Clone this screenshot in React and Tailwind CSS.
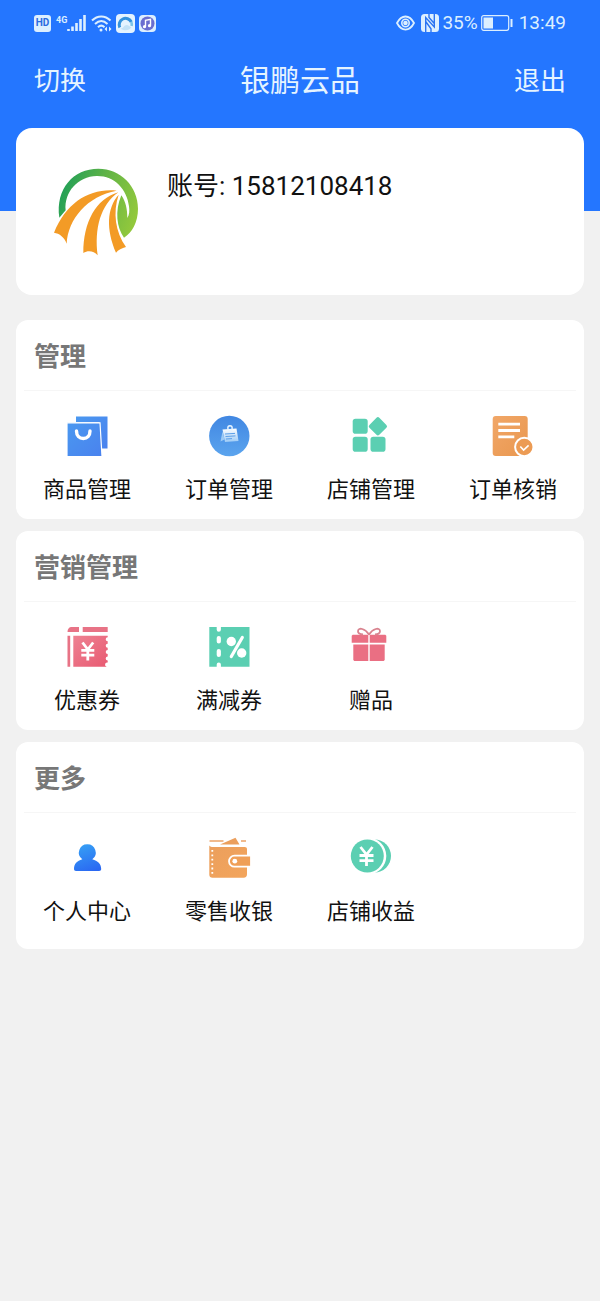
import clsx from 'clsx';

const BagIcon = () => (
  <svg viewBox="0 0 44 44" className="size-11" aria-hidden="true">
    <defs>
      <linearGradient id="bag" x1="0" y1="0" x2="1" y2="1">
        <stop offset="0" stopColor="#4a98f0" />
        <stop offset="1" stopColor="#4a82ee" />
      </linearGradient>
    </defs>
    <path d="M11 2.5h31.500v32H36L34.500 8H11z" fill="url(#bag)" />
    <path d="M2 8.800h33l2 33.700H2z" fill="url(#bag)" stroke="#fff" strokeWidth="1.200" />
    <path d="M11.500 17c0 5 3 7.500 6.800 7.500s6.700-2.500 6.700-7.500" fill="none" stroke="#fff" strokeWidth="3.400" strokeLinecap="round" />
  </svg>
);

const NoteIcon = () => (
  <svg viewBox="0 0 44 44" className="size-11" aria-hidden="true">
    <defs>
      <linearGradient id="note" x1="0" y1="0" x2="0" y2="1">
        <stop offset="0" stopColor="#4187e2" />
        <stop offset="1" stopColor="#5ba4ee" />
      </linearGradient>
      <linearGradient id="paper" x1="0" y1="0" x2="0" y2="1">
        <stop offset="0" stopColor="#fff" />
        <stop offset="1" stopColor="#9dcbf6" />
      </linearGradient>
    </defs>
    <circle cx="22.300" cy="22" r="20.200" fill="url(#note)" />
    <path d="M15.500 17.500l-2 10 4-2z" fill="#9dcbf6" />
    <path d="M15.500 15.500l14-1 2 12.500-13.500 1z" fill="url(#paper)" />
    <circle cx="23" cy="14" r="2.200" fill="none" stroke="#e8f4ff" strokeWidth="1.400" />
    <path d="M18 20l10-.6M18.500 22.500l10-.6M19 25l6-.4" stroke="#5b9fe8" strokeWidth="1" />
  </svg>
);

const ShopIcon = () => (
  <svg viewBox="0 0 44 44" className="size-11" fill="#5bcfb2" aria-hidden="true">
    <rect x="3.700" y="4.700" width="15" height="15" rx="2.800" />
    <rect x="3.700" y="22.700" width="15" height="15" rx="2.800" />
    <rect x="21.500" y="22.700" width="15" height="15" rx="2.800" />
    <rect x="21.900" y="5.300" width="14" height="14" rx="2" transform="rotate(45 28.900 12.300)" />
  </svg>
);

const VerifyIcon = () => (
  <svg viewBox="0 0 44 44" className="size-11" aria-hidden="true">
    <defs>
      <linearGradient id="verify" x1="0" y1="0" x2="1" y2="1">
        <stop offset="0" stopColor="#f1a768" />
        <stop offset="1" stopColor="#e9974f" />
      </linearGradient>
    </defs>
    <rect x="1.700" y="2" width="35" height="40" rx="3" fill="url(#verify)" />
    <path d="M7.300 10.200H29M7.300 16.500H29M7.300 22.800h16" stroke="#fff" strokeWidth="2.800" />
    <circle cx="33.300" cy="33" r="9.200" fill="#ec9b54" stroke="#fff" strokeWidth="2" />
    <path d="M29.300 32.500l3.300 3.500 5-4.700" fill="none" stroke="#fff" strokeWidth="1.600" />
  </svg>
);

const CouponIcon = () => (
  <svg viewBox="0 0 44 44" className="size-11" aria-hidden="true">
    <defs>
      <linearGradient id="coupon" x1="0" y1="0" x2="1" y2="1">
        <stop offset="0" stopColor="#ee8292" />
        <stop offset="1" stopColor="#e85a72" />
      </linearGradient>
    </defs>
    <path d="M2.500 7c0-3 1.500-5 4-5H14v5zM17.700 2h25v5h-25zM2.500 10.700h2.700v31H2.500z" fill="#e87386" />
    <path d="M8.300 10.700h34.400v1.600a2 2 0 000 4v2.400a2 2 0 000 4v2.400a2 2 0 000 4v2.400a2 2 0 000 4v2a2 2 0 00-1 4.200H8.300z" fill="url(#coupon)" />
    <path d="M17.500 17.500l5.300 7 5.400-7M22.800 24.500V35.500M16.300 25.300h13M16.300 30.200h13" fill="none" stroke="#fff" strokeWidth="2.800" />
  </svg>
);

const DiscountIcon = () => (
  <svg viewBox="0 0 44 44" className="size-11" aria-hidden="true">
    <path d="M2.300 2h40.200v39.700H2.300z" fill="#5bcfb2" />
    <path d="M11.800 2v2.700M11.800 13v3.500M11.800 26v4M11.800 39.500v2.500" stroke="#fff" strokeWidth="4.200" strokeLinecap="round" />
    <circle cx="24.300" cy="16.500" r="4.700" fill="#fff" />
    <circle cx="34.700" cy="28" r="4.700" fill="#fff" />
    <path d="M35.300 12.500l-11 19" stroke="#fff" strokeWidth="3.200" strokeLinecap="round" />
  </svg>
);

const GiftIcon = () => (
  <svg viewBox="0 0 44 44" className="size-11" aria-hidden="true">
    <g fill="#ea6f83">
      <path d="M3.700 9.700h15.600v8H2.700v-7zM20.700 9.700h15.600l1 1v7H20.700z" />
      <path d="M4.300 19.500h15V36H5.300l-1-1zM20.700 19.500h15V35l-1 1h-14z" />
    </g>
    <path d="M20 9.500C16 3.500 9.500 2 9 6c-.2 2.500 2.500 3.300 5 3.500M20 9.500c4-6 10.500-7.500 11-3.500.2 2.500-2.500 3.300-5 3.500" fill="none" stroke="#d9838f" strokeWidth="1.800" />
  </svg>
);

const PersonIcon = () => (
  <svg viewBox="0 0 44 44" className="size-11" aria-hidden="true">
    <defs>
      <linearGradient id="person" gradientUnits="userSpaceOnUse" x1="16" y1="8" x2="26" y2="36">
        <stop offset="0" stopColor="#36a0f5" />
        <stop offset="1" stopColor="#2a68f2" />
      </linearGradient>
    </defs>
    <path d="M22.300 8.300a8.300 8.300 0 015 15c5.500 1.500 8.900 4.700 8.900 9.700 0 1.300-.8 2-2 2H11c-1.200 0-2-.7-2-2 0-5 3-8.200 8.300-9.700a8.300 8.300 0 015-15z" fill="url(#person)" />
  </svg>
);

const WalletIcon = () => (
  <svg viewBox="0 0 44 44" className="size-11" aria-hidden="true">
    <defs>
      <linearGradient id="wallet" x1="0" y1="0" x2="1" y2="1">
        <stop offset="0" stopColor="#eb9f5d" />
        <stop offset="1" stopColor="#f3a55c" />
      </linearGradient>
    </defs>
    <path d="M2.500 5h14M34 5h5" stroke="#eba468" strokeWidth="1.600" />
    <path d="M13 8.500L28.500 1.700l4 6.800z" fill="#eb9f5d" />
    <path d="M2.300 9.500c1 1.200 2 1.500 4 1.500h31.400c1.500 0 2.300.8 2.300 2.300v25c0 2.200-1.200 3.400-3.400 3.400H5.500c-2 0-3.200-1-3.200-3z" fill="url(#wallet)" />
    <path d="M5.300 14v24" stroke="#fff" strokeWidth="1.800" strokeDasharray="1.800 2.600" />
    <path d="M44 19.700H27.500a5.500 5.500 0 000 11H44z" fill="#ef9f57" stroke="#fff" strokeWidth="1.800" />
    <circle cx="27.800" cy="25.200" r="2.400" fill="#fff" />
  </svg>
);

const CoinIcon = () => (
  <svg viewBox="0 0 44 44" className="size-11" aria-hidden="true">
    <circle cx="25.500" cy="20" r="16.500" fill="#5bcfb2" />
    <circle cx="19" cy="20" r="18.300" fill="#fff" />
    <circle cx="18.300" cy="20" r="16.500" fill="#5bcfb2" />
    <path d="M11.500 11l6 7.500 6-7.500M17.500 18.500V30M10.500 19.500h14M10.500 24.700h14" fill="none" stroke="#fff" strokeWidth="2.800" />
  </svg>
);

const Logo = () => (
  <svg viewBox="42 38 258 264" className="h-[88px] w-[86px] shrink-0" role="img" aria-label="银鹏云品">
    <defs>
      <linearGradient id="ring" x1="0" y1="0.3" x2="1" y2="0.6">
        <stop offset="0" stopColor="#1f9f58" />
        <stop offset="0.5" stopColor="#62b446" />
        <stop offset="1" stopColor="#92c83c" />
      </linearGradient>
    </defs>
    <path
      d="M58 187C46 100 100 40 175 40c66 0 119 52 119 120 0 40-18 72-42 87-22-30-28-80-8-127 14 20 18 44 18 68 6-10 7-20 5-35-6-52-44-92-97-91-56 1-98 48-93 103z"
      fill="url(#ring)"
    />
    <g fill="#f39b26">
      <path d="M230 106C150 98 80 140 42 232c16 2 32 14 38 33 4-74 62-143 150-159z" />
      <path d="M235 111c-68 20-105 90-105 182 14-9 32-6 43 7-10-80 8-150 62-189z" />
      <path d="M236 118c-36 40-38 104-8 174 6-8 18-14 30-17-32-46-40-103-22-157z" />
    </g>
  </svg>
);

const sections = [
  {
    title: '管理',
    items: [
      { name: '商品管理', icon: BagIcon },
      { name: '订单管理', icon: NoteIcon },
      { name: '店铺管理', icon: ShopIcon },
      { name: '订单核销', icon: VerifyIcon },
    ],
  },
  {
    title: '营销管理',
    items: [
      { name: '优惠券', icon: CouponIcon },
      { name: '满减券', icon: DiscountIcon },
      { name: '赠品', icon: GiftIcon },
    ],
  },
  {
    title: '更多',
    items: [
      { name: '个人中心', icon: PersonIcon },
      { name: '零售收银', icon: WalletIcon },
      { name: '店铺收益', icon: CoinIcon },
    ],
  },
];

const StatusBar = () => (
  <div className="flex h-[46px] items-center justify-between px-[34px] text-[19px] leading-6 text-[#dcefff]">
    <div className="flex items-center gap-1">
      <span className="flex size-[17px] items-center justify-center rounded-[3px] bg-[#dcefff] text-[10px] font-bold leading-none text-[#2a6ae0]">HD</span>
      <div className="ml-px flex">
        <span className="text-[9px] font-bold leading-3">4G</span>
        <svg viewBox="0 0 20 18" className="h-[18px] w-5" aria-hidden="true">
          <path d="M1.500 17v-2M5.500 17v-4.500M9.500 17V9M13.500 17V5M17.500 17V1" stroke="currentColor" strokeWidth="2.600" />
        </svg>
      </div>
      <svg viewBox="0 0 21 18" className="h-[18px] w-[21px]" fill="none" stroke="currentColor" strokeWidth="2" aria-hidden="true">
        <path d="M1 6.500c5.500-5.500 13-5.500 18.500 0M4 10c4-3.800 8.500-3.800 12.500 0M7 13.300c2-2 4.500-2 6.500 0" />
        <circle cx="10" cy="16" r="1.500" fill="currentColor" stroke="none" />
        <path d="M16 12.500L13.500 15l2.500 2.500zM18 12.500l2.500 2.500-2.500 2.500z" fill="currentColor" stroke="none" />
      </svg>
      <svg viewBox="0 0 19 19" className="size-[19px]" aria-hidden="true">
        <rect width="19" height="19" rx="4" fill="#e4f3ff" />
        <path d="M3.800 13.500a6.200 6.200 0 1111.500-5.500" fill="none" stroke="#3492dc" strokeWidth="3" />
        <path d="M15.300 8a6.200 6.200 0 01.3 4" fill="none" stroke="#7cc4e8" strokeWidth="2.600" />
        <path d="M4.500 14.500c3 .3 3.500-3.700 6.500-3.500 2 .2 2.500 2 4.500 2-2 3.500-7.500 4.500-11 1.500z" fill="#c3e2f7" />
      </svg>
      <svg viewBox="0 0 17 17" className="size-[17px]" aria-hidden="true">
        <rect width="17" height="17" rx="4" fill="#dcefff" />
        <circle cx="8.500" cy="8.500" r="7" fill="#6a6ed0" />
        <path d="M6.500 11.500V5.300l5-1v6.200" fill="none" stroke="#fff" strokeWidth="1.400" />
        <circle cx="5.500" cy="11.700" r="1.600" fill="#fff" />
        <circle cx="10.500" cy="10.700" r="1.600" fill="#fff" />
      </svg>
    </div>
    <div className="flex items-center gap-[3px]">
      <svg viewBox="0 0 19 16" className="mr-[3px] h-4 w-[19px]" fill="none" stroke="currentColor" aria-hidden="true">
        <path d="M1 8c4.500-8.700 12.500-8.700 17 0-4.500 8.700-12.500 8.700-17 0z" strokeWidth="1.800" />
        <circle cx="9.500" cy="8" r="3.700" strokeWidth="1.600" />
        <circle cx="9.500" cy="8" r="2.300" fill="currentColor" stroke="none" />
      </svg>
      <svg viewBox="0 0 18 18" className="size-[18px]" aria-hidden="true">
        <rect width="18" height="18" rx="3.500" fill="#dcefff" />
        <path d="M4.700 18V3.500L13.300 13V0M4.700 7.500l5.300 7.300V18M8 0v3.500l5.300 6" fill="none" stroke="#2a74f2" strokeWidth="1.400" />
      </svg>
      <span>35%</span>
      <svg viewBox="0 0 32 16" className="h-4 w-8" aria-hidden="true">
        <rect x="0.700" y="0.700" width="27" height="14.600" rx="2" fill="none" stroke="currentColor" strokeWidth="1.200" />
        <rect x="2.500" y="2.500" width="9.500" height="11" fill="currentColor" />
        <path d="M30.500 4v8" stroke="currentColor" strokeWidth="2" />
      </svg>
      <span className="ml-[3px]">13:49</span>
    </div>
  </div>
);

const Section = ({ title, items }) => (
  <section className="rounded-xl bg-white last:pb-2">
    <div className="mx-2 flex h-[71px] items-center border-b border-[#f6f6f6] px-[10px] pt-1">
      <h2 className="text-[26px] font-bold leading-8 text-[#777]">{title}</h2>
    </div>
    <ul className="grid grid-cols-4 pt-[23px] pb-[14px]">
      {items.map(({ name, icon: Icon }) => (
        <li key={name}>
          <a href="#" className="flex flex-col items-center gap-[17px] text-[22px] leading-[30px] text-[#111]">
            <Icon />
            <span>{name}</span>
          </a>
        </li>
      ))}
    </ul>
  </section>
);

const App = () => {
  const navButton = 'text-[26px] leading-8';
  return (
    <div className="min-h-screen bg-[#f1f1f1] font-[Roboto,'Noto_Sans_CJK_SC',sans-serif]">
      <header className="bg-[#2476ff] pb-[99px]">
        <StatusBar />
        <nav className="grid h-[66px] grid-cols-3 items-center px-[34px] pt-1 text-[#e6f4ff]">
          <button type="button" className={clsx(navButton, 'justify-self-start')}>切换</button>
          <h1 className="justify-self-center text-[30px] leading-9">银鹏云品</h1>
          <button type="button" className={clsx(navButton, 'justify-self-end')}>退出</button>
        </nav>
      </header>
      <main className="-mt-[83px] px-4">
        <div className="flex items-start gap-[27px] rounded-2xl bg-white px-[38px] pt-10 pb-[39px]">
          <Logo />
          <p className="text-[26px] leading-9 text-[#111]">账号: 15812108418</p>
        </div>
        <div className="mt-[25px] flex flex-col gap-3">
          {sections.map((section) => (
            <Section key={section.title} {...section} />
          ))}
        </div>
      </main>
    </div>
  );
};

export default App;
